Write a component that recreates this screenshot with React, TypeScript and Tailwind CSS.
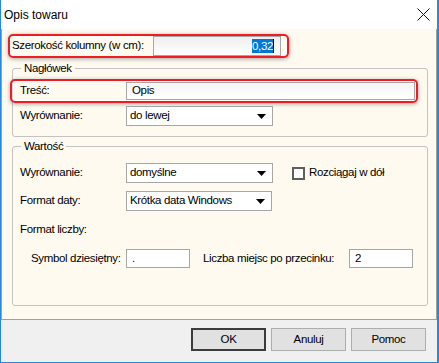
const font = "font-['Liberation_Sans',Arial,sans-serif]";

function Arrow() {
  return (
    <svg width="9" height="5" viewBox="0 0 9 5" className="shrink-0">
      <path d="M0 0H9L4.5 5Z" fill="#000" />
    </svg>
  );
}

function Select({ value, width }: { value: string; width: string }) {
  return (
    <div className={`${width} h-[20px] bg-white border border-[#a6a6a6] flex items-center pl-[3px] pr-[6px]`}>
      <span className="flex-1">{value}</span>
      <Arrow />
    </div>
  );
}

function Field({ value, className }: { value: string; className: string }) {
  return (
    <div className={`${className} bg-white border border-[#a6a6a6] flex items-center pl-[5px]`}>{value}</div>
  );
}

function Button({ label, primary }: { label: string; primary?: boolean }) {
  return (
    <button
      className={`w-[75px] h-[23px] bg-[#e1e1e1] flex items-center justify-center ${
        primary ? "border-2 border-[#3c3c3c]" : "border border-[#adadad]"
      }`}
    >
      {label}
    </button>
  );
}

export default function App() {
  return (
    <div className={`${font} text-[11.5px] tracking-[-0.35px] text-black w-[439px] h-[363px] flex flex-col border-l border-r-2 border-b border-[#2b88d8] bg-white`}>
      {/* Title bar */}
      <div className="h-[29px] flex items-center justify-between pl-[3px] pr-[6px] bg-white">
        <span className="text-[12px] tracking-normal">Opis towaru</span>
        <svg width="13" height="13" viewBox="0 0 13 13" className="mr-[1px]">
          <path d="M0.5 0.5L12.5 12.5M12.5 0.5L0.5 12.5" stroke="#111" strokeWidth="1" />
        </svg>
      </div>

      {/* Content */}
      <div className="h-[291px] bg-[#fffaf0] border-l border-r border-b border-[#a0a0a0] flex flex-col">
        <div className="mt-[5px] ml-[6px] w-[281px] h-[24px] border-2 border-[#ee1c25] rounded-[5px] shadow-[0_1px_4px_rgba(0,0,0,0.35),inset_0_0_4px_rgba(255,255,255,0.9)] flex items-center pl-[2px] pr-[6px]">
          <span className="flex-1">Szerokość kolumny (w cm):</span>
          <div className="w-[128px] h-[20px] border border-[#a6a6a6] bg-gradient-to-b from-[#eeeeee] to-white flex items-center justify-end pr-[6px]">
            <span className="bg-[#0078d7] text-white leading-[14px]">0,32</span>
            <span className="w-[1px] h-[14px] bg-black" />
          </div>
        </div>

        <fieldset className="mt-[4px] ml-[10px] w-[416px] border border-[#c3c3c3] rounded-[3px] pl-0 pb-[10px]">
          <legend className="ml-[8px] px-[3px] leading-[13px]">Nagłówek</legend>
          <div className="mt-[4px] ml-[-3px] w-[408px] h-[24px] border-2 border-[#ee1c25] rounded-[5px] shadow-[0_1px_4px_rgba(0,0,0,0.35),inset_0_0_4px_rgba(255,255,255,0.9)] flex items-center pl-[8px] pr-[1px]">
            <span className="flex-1">Treść:</span>
            <Field value="Opis" className="w-[289px] h-[18px] bg-gradient-to-b from-[#f4f4f4] to-white" />
          </div>
          <div className="mt-[3px] pl-[7px] flex items-center">
            <span className="w-[106px]">Wyrównanie:</span>
            <Select value="do lewej" width="w-[147px]" />
          </div>
        </fieldset>

        <fieldset className="mt-[3px] ml-[10px] w-[416px] h-[166px] border border-[#c3c3c3] rounded-[3px]">
          <legend className="ml-[8px] px-[3px] leading-[13px]">Wartość</legend>
          <div className="mt-[10px] pl-[7px] flex items-center">
            <span className="w-[106px]">Wyrównanie:</span>
            <Select value="domyślne" width="w-[147px]" />
            <span className="ml-[19px] w-[13px] h-[13px] border-2 border-[#5e5e5e] bg-white" />
            <span className="ml-[4px]">Rozciągaj w dół</span>
          </div>
          <div className="mt-[8px] pl-[7px] flex items-center">
            <span className="w-[106px]">Format daty:</span>
            <Select value="Krótka data Windows" width="w-[146px]" />
          </div>
          <div className="mt-[12px] pl-[7px] leading-[13px]">Format liczby:</div>
          <div className="mt-[13px] pl-[18px] flex items-center">
            <span className="w-[95px]">Symbol dziesiętny:</span>
            <Field value="." className="w-[64px] h-[19px]" />
            <span className="ml-[13px] w-[146px]">Liczba miejsc po przecinku:</span>
            <Field value="2" className="w-[64px] h-[19px]" />
          </div>
        </fieldset>
      </div>

      {/* Footer */}
      <div className="flex-1 bg-[#f0f0f0] flex justify-end gap-[5px] pt-[8px] pr-[11px]">
        <Button label="OK" primary />
        <Button label="Anuluj" />
        <Button label="Pomoc" />
      </div>
    </div>
  );
}
